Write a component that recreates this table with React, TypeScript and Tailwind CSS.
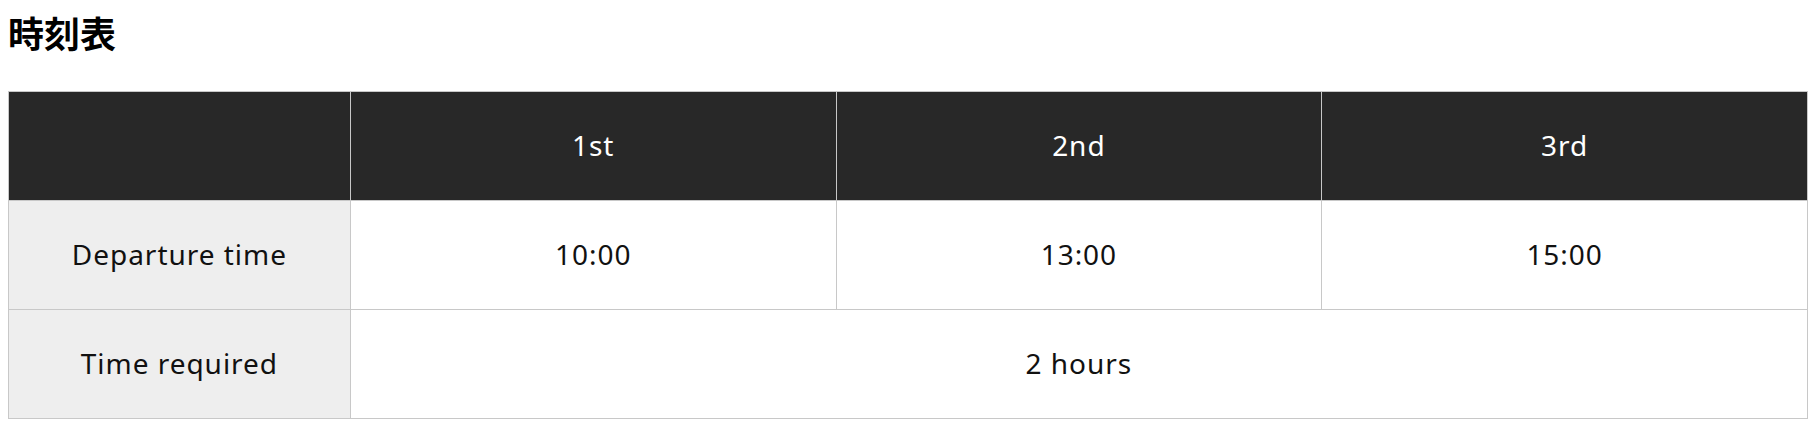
import React from "react";

const font = { fontFamily: '"Noto Sans", "Noto Sans CJK JP", sans-serif' };

export default function App() {
  const cols = ["1st", "2nd", "3rd"];
  const times = ["10:00", "13:00", "15:00"];
  return (
    <div className="bg-white px-2 pt-[8px] text-[#111]" style={font}>
      <h2 className="text-[36px] font-bold leading-[48px] text-black" style={{ fontFamily: '"Noto Sans CJK JP", sans-serif' }}>
        時刻表
      </h2>
      <table className="mt-[35px] w-full border-collapse text-[28px] font-normal tracking-[0.035em]">
        <colgroup>
          <col className="w-[19%]" />
          <col className="w-[27%]" />
          <col className="w-[27%]" />
          <col className="w-[27%]" />
        </colgroup>
        <thead>
          <tr>
            <th className="h-[109px] border border-[#c8c8c8] bg-[#282828]"></th>
            {cols.map((c) => (
              <th key={c} className="h-[109px] border border-[#c8c8c8] bg-[#282828] pb-[3px] text-center font-normal text-white">
                {c}
              </th>
            ))}
          </tr>
        </thead>
        <tbody>
          <tr>
            <td className="h-[109px] border border-[#c8c8c8] bg-[#eeeeee] pb-[3px] text-center">Departure time</td>
            {times.map((t) => (
              <td key={t} className="h-[109px] border border-[#c8c8c8] pb-[3px] text-center">
                {t}
              </td>
            ))}
          </tr>
          <tr>
            <td className="h-[109px] border border-[#c8c8c8] bg-[#eeeeee] pb-[3px] text-center">Time required</td>
            <td colSpan={3} className="h-[109px] border border-[#c8c8c8] pb-[3px] text-center">
              2 hours
            </td>
          </tr>
        </tbody>
      </table>
    </div>
  );
}
